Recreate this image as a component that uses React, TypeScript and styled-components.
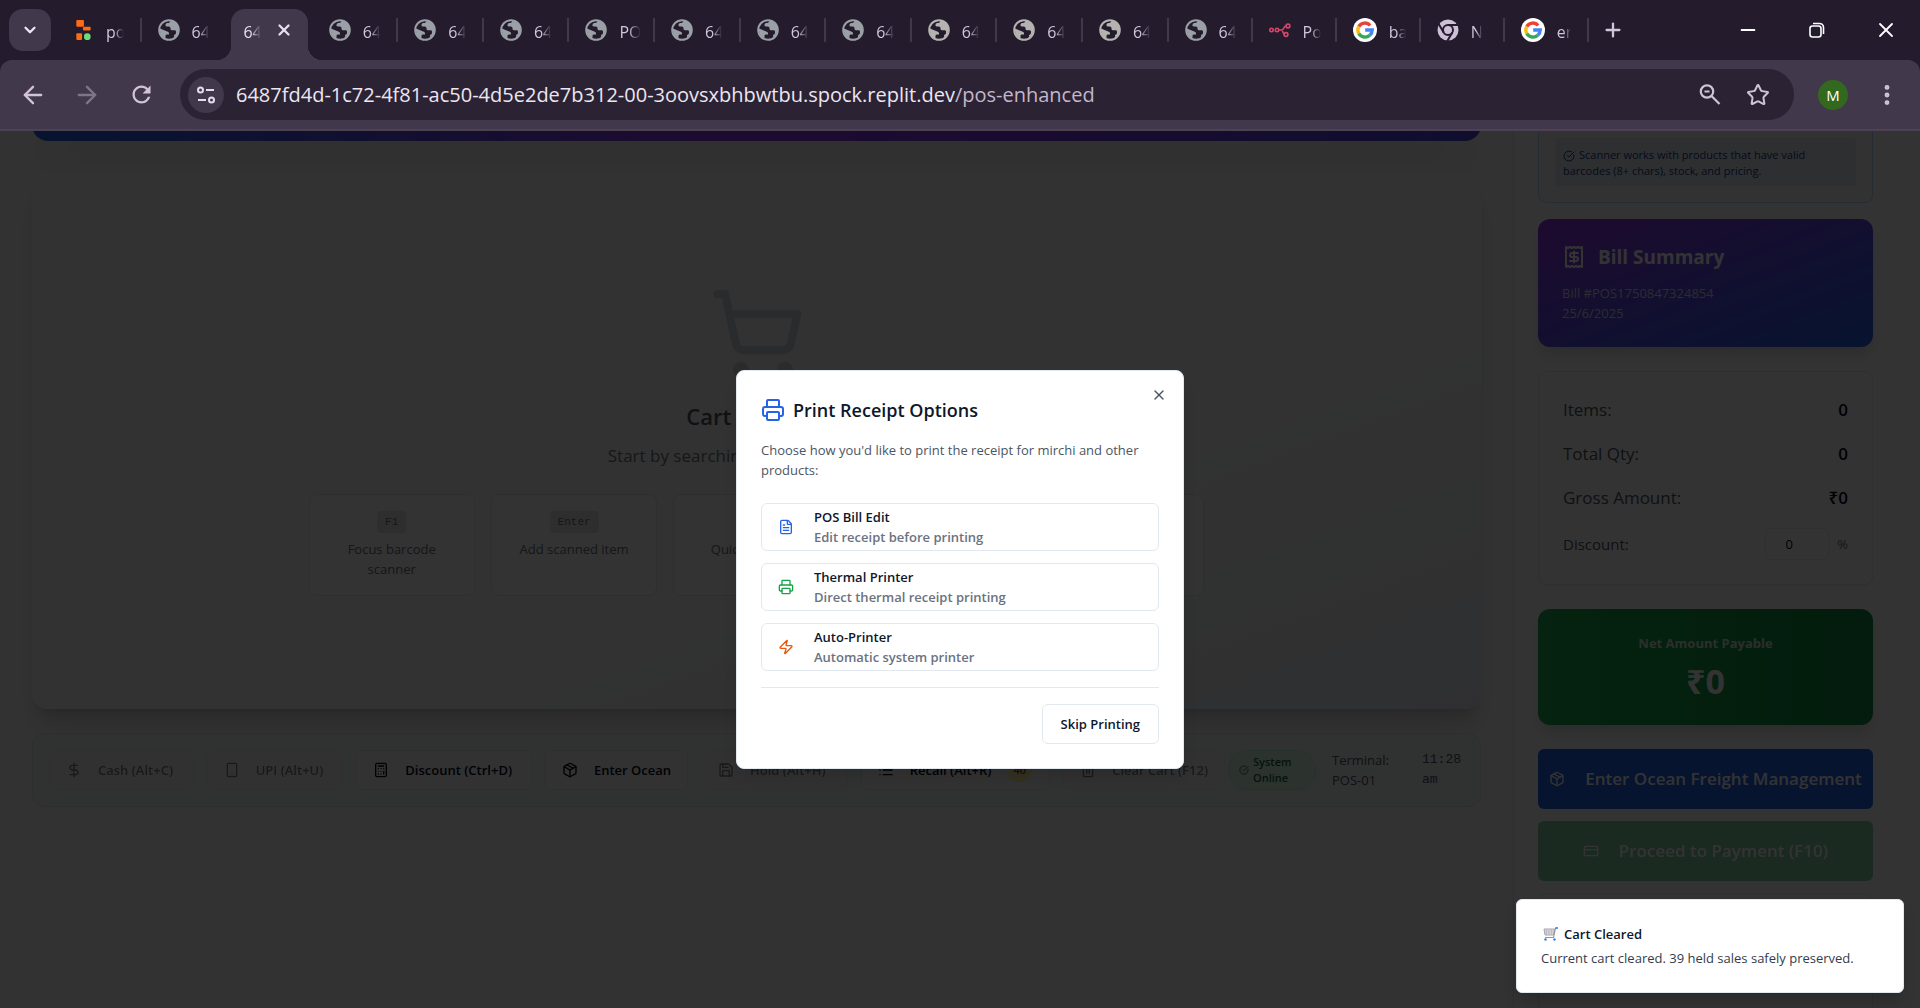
import React from "react";
import styled, { createGlobalStyle, css } from "styled-components";
import {
  ArrowLeft, ArrowRight, Calculator, ChevronDown, CircleCheckBig, CreditCard, DollarSign, EllipsisVertical,
  FileText, List, Minus, Package, Plus, Printer, Receipt, Save, ShoppingCart, Smartphone, Star,
  Trash2, X, Zap,
} from "lucide-react";

const sans = `"Open Sans", "Noto Sans", "Liberation Sans", sans-serif`;
const mono = `"Liberation Mono", monospace`;

const GlobalStyle = createGlobalStyle`
  *, *::before, *::after { box-sizing: border-box; }
  body { margin: 0; background: #fff; color: #020817; font-family: ${sans}; font-size: 13px; line-height: 20px; }
  h1, h2, h3, p, ul, dl, dd { margin: 0; padding: 0; }
  button, input { font: inherit; color: inherit; }
  svg { flex: none; display: block; }
`;

const Shell = styled.div`
  display: flex;
  flex-direction: column;
  height: 100vh;
  overflow: hidden;
`;

/* ---------- Browser chrome ---------- */

const TabStrip = styled.div`
  display: flex;
  align-items: center;
  height: 60px;
  padding-left: 9px;
  background: #241b2d;
  color: #d3c6dc;
`;

const IconButton = styled.button<{ $size?: number; $fill?: string; $radius?: number }>`
  display: flex;
  align-items: center;
  justify-content: center;
  flex: none;
  width: ${(p) => p.$size ?? 36}px;
  height: ${(p) => p.$size ?? 36}px;
  padding: 0;
  border: 0;
  border-radius: ${(p) => p.$radius ?? 18}px;
  background: ${(p) => p.$fill ?? "transparent"};
`;

const Tabs = styled.div`
  display: flex;
  flex: 0 1 1533px;
  height: 60px;
  margin-left: 5px;
`;

const TabCell = styled.div<{ $divider: boolean; $grow: number }>`
  display: flex;
  flex: ${(p) => p.$grow} 1 0;
  min-width: 0;
  align-items: center;
  background: ${(p) =>
    p.$divider ? "linear-gradient(#42384b, #42384b) right 18px / 2px 24px no-repeat" : "none"};
`;

const TabButton = styled.button`
  display: flex;
  align-items: center;
  gap: 12px;
  height: 42px;
  padding: 0 16px;
  border: 0;
  background: none;
  font-size: 16px;
`;

const TabLabel = styled.span`
  padding-top: 3px;
  white-space: nowrap;
  line-height: 24px;
  mask-image: linear-gradient(90deg, #000 40%, transparent 95%);
`;

const ActiveTab = styled.div`
  position: relative;
  display: flex;
  align-items: center;
  justify-content: space-between;
  width: 77px;
  height: 51px;
  margin: 9px auto 0;
  padding: 0 15px 9px 12px;
  border-radius: 14px 14px 0 0;
  background: #42384b;
  color: #e9e0ef;
  font-size: 16px;
  &::before, &::after {
    content: "";
    position: absolute;
    bottom: 0;
    width: 14px;
    height: 14px;
  }
  &::before { left: -14px; background: radial-gradient(circle at 0 0, transparent 14px, #42384b 14px); }
  &::after { right: -14px; background: radial-gradient(circle at 100% 0, transparent 14px, #42384b 14px); }
`;

const PlainButton = styled.button`
  display: flex;
  padding: 0;
  border: 0;
  background: none;
`;

const WindowControls = styled.div`
  display: flex;
  margin-left: auto;
  color: #fff;
`;

const WindowButton = styled.button`
  display: flex;
  align-items: center;
  justify-content: center;
  width: 69px;
  height: 60px;
  padding: 0;
  border: 0;
  background: none;
`;

const NavBar = styled.div`
  background: #241b2d;
`;

const NavInner = styled.div`
  display: flex;
  align-items: center;
  height: 71px;
  padding: 0 15px;
  border-bottom: 2px solid #4d4154;
  border-radius: 12px 12px 0 0;
  background: #42384b;
  color: #d3c2dc;
`;

const NavButtons = styled.div`
  display: flex;
  gap: 18px;
  margin-right: 21px;
`;

const AddressBar = styled.div`
  display: flex;
  flex: 1;
  align-items: center;
  height: 51px;
  padding: 0 18px 0 8px;
  border-radius: 26px;
  background: #2b2234;
`;

const AddressText = styled.input<{ $muted?: boolean }>`
  padding: 0;
  border: 0;
  outline: 0;
  background: none;
  font-size: 20px;
  line-height: 28px;
  color: ${(p) => (p.$muted ? "#c3b7ca" : "#ece6f0")};
  ${(p) => (p.$muted ? css`flex: 1; min-width: 0;` : css`field-sizing: content; margin-left: 12px;`)}
`;

const AddressActions = styled.div`
  display: flex;
  gap: 12px;
`;

const Avatar = styled.button`
  width: 30px;
  height: 30px;
  margin: 0 21px 0 24px;
  padding: 0;
  border: 0;
  border-radius: 50%;
  background: #33691e;
  color: #fff;
  font-size: 15px;
`;

/* ---------- Page ---------- */

const Viewport = styled.div`
  position: relative;
  flex: 1;
  min-height: 0;
  overflow: hidden;
`;

const Page = styled.div`
  display: flex;
  height: 100%;
  background: #fafafa;
`;

const Main = styled.main`
  display: flex;
  flex: 1;
  flex-direction: column;
  min-width: 0;
  padding: 0 32px;
`;

const Banner = styled.div`
  flex: none;
  height: 34px;
  margin-top: -24px;
  border-radius: 16px;
  background: linear-gradient(90deg, #2563eb, #9333ea 50%, #4f46e5);
  box-shadow: 0 25px 50px -12px rgba(0, 0, 0, 0.25);
`;

const CartCard = styled.section`
  display: flex;
  flex-direction: column;
  align-items: center;
  margin-top: 32px;
  padding: 113px 24px;
  border-radius: 16px;
  background: linear-gradient(to bottom right, #fafafa 60%, #e8ecf2);
  box-shadow: 0 20px 25px -5px rgba(0, 0, 0, 0.14), 0 8px 10px -6px rgba(0, 0, 0, 0.14);
  svg { color: #d1d5db; }
`;

const CartTitle = styled.h2`
  margin-top: 16px;
  font-size: 22px;
  line-height: 36px;
  font-weight: 600;
  color: #4b5563;
`;

const CartHint = styled.p`
  margin: 8px 0 24px;
  font-size: 17px;
  line-height: 28px;
  color: #6b7280;
`;

const Shortcuts = styled.ul`
  display: grid;
  grid-template-columns: repeat(5, 1fr);
  gap: 16px;
  width: 100%;
  max-width: 896px;
  list-style: none;
`;

const Shortcut = styled.li`
  display: flex;
  flex-direction: column;
  align-items: center;
  padding: 16px;
  border: 1px solid #e5e7eb;
  border-radius: 8px;
  background: #fcfcfc;
  text-align: center;
  color: #6b7280;
`;

const Kbd = styled.kbd`
  margin-bottom: 6px;
  padding: 1px 8px;
  border-radius: 4px;
  background: #e5e7eb;
  font-family: ${mono};
  font-size: 11px;
  line-height: 20px;
`;

const ActionBar = styled.section`
  display: flex;
  align-items: center;
  gap: 13px;
  margin-top: 24px;
  padding: 16px;
  border: 1px solid #e0e3e6;
  border-radius: 12px;
  background: #f1f3f3;
`;

const ActionButton = styled.button<{ $width: number }>`
  display: flex;
  flex: 0 1 ${(p) => p.$width}px;
  align-items: center;
  gap: 16px;
  height: 40px;
  padding: 0 16px;
  border: 1px solid #e5e7eb;
  border-radius: 6px;
  background: #fafafa;
  font-weight: 600;
  white-space: nowrap;
  color: #020817;
  &:disabled { opacity: 0.5; }
`;

const CountBadge = styled.span`
  padding: 2px 6px;
  border-radius: 12px;
  background: #fef3a0;
  font-size: 11px;
  color: #92400e;
`;

const Status = styled.div`
  display: flex;
  flex: 1;
  align-items: center;
  gap: 16px;
  margin-left: -10px;
  color: #4b5563;
`;

const OnlinePill = styled.div`
  display: flex;
  align-items: center;
  gap: 4px;
  width: 88px;
  height: 40px;
  padding: 0 10px;
  border: 1px solid #bbf7d0;
  border-radius: 20px;
  background: #dcfce7;
  color: #166534;
  font-size: 11px;
  line-height: 16px;
  font-weight: 600;
`;

const Terminal = styled.p`
  width: 74px;
`;

const Clock = styled.time`
  width: 42px;
  font-family: ${mono};
  font-size: 13px;
`;

const Sidebar = styled.aside`
  flex: none;
  width: 407px;
  padding: 0 47px 0 24px;
  border-left: 1px solid #e5e7eb;
  background: #fff;
`;

const ScannerCard = styled.section`
  padding: 7px 16px 16px;
  border: 1px solid #bfdbfe;
  border-top: 0;
  border-radius: 0 0 8px 8px;
  background: #f7f9fb;
`;

const ScannerNote = styled.p`
  padding: 9px 8px 7px;
  border-radius: 4px;
  background: #e4ebf4;
  color: #1e3a8a;
  font-size: 11px;
  line-height: 16px;
  svg { display: inline-block; margin-right: 4px; vertical-align: -3px; }
`;

const BillCard = styled.section`
  margin-top: 16px;
  padding: 24px;
  border-radius: 12px;
  background: linear-gradient(to bottom right, #9333ea, #2563eb);
  box-shadow: 0 10px 15px -3px rgba(0, 0, 0, 0.15);
  color: #d9d6f0;
`;

const BillTitle = styled.h2`
  display: flex;
  align-items: center;
  gap: 12px;
  margin-bottom: 12px;
  color: #fff;
  font-size: 19px;
  line-height: 28px;
  font-weight: 700;
`;

const Totals = styled.section`
  display: flex;
  flex-direction: column;
  gap: 16px;
  margin-top: 24px;
  padding: 24px;
  border: 1px solid #e9ebee;
  border-radius: 8px;
  box-shadow: 0 1px 2px rgba(0, 0, 0, 0.06);
`;

const TotalRow = styled.div<{ $small?: boolean }>`
  display: flex;
  align-items: center;
  justify-content: space-between;
  font-size: ${(p) => (p.$small ? 15 : 17)}px;
  line-height: 28px;
  color: #4b5563;
  strong { font-weight: 600; color: #020817; }
`;

const DiscountField = styled.div`
  display: flex;
  align-items: center;
  gap: 8px;
  font-size: 13px;
  color: #6b7280;
  input {
    width: 64px;
    height: 32px;
    padding: 0 28px 0 12px;
    border: 1px solid #e2e8f0;
    border-radius: 6px;
    background: #fff;
    color: #020817;
    text-align: center;
  }
`;

const NetCard = styled.section`
  margin-top: 24px;
  padding: 24px;
  border-radius: 12px;
  background: linear-gradient(90deg, #1aae50, #118a41);
  box-shadow: 0 10px 15px -3px rgba(0, 0, 0, 0.15);
  text-align: center;
  color: #d5e8dc;
  font-weight: 700;
`;

const NetValue = styled.p`
  margin-top: 8px;
  color: #fff;
  font-size: 34px;
  line-height: 40px;
`;

const SideActions = styled.div`
  display: flex;
  flex-direction: column;
  gap: 12px;
  margin-top: 24px;
`;

const BigButton = styled.button<{ $fill: string }>`
  display: flex;
  align-items: center;
  justify-content: center;
  gap: 20px;
  height: 60px;
  padding: 0 8px;
  border: 0;
  border-radius: 6px;
  background: ${(p) => p.$fill};
  color: #fff;
  font-size: 17px;
  font-weight: 600;
  white-space: nowrap;
  &:disabled { opacity: 0.5; }
`;

const HeldCard = styled.div`
  height: 120px;
  border: 1px solid #e9ebee;
  border-radius: 8px;
`;

/* ---------- Overlay ---------- */

const Backdrop = styled.div`
  position: absolute;
  inset: 0;
  display: flex;
  align-items: center;
  justify-content: center;
  background: rgba(0, 0, 0, 0.8);
`;

const Dialog = styled.section`
  position: relative;
  width: 448px;
  max-width: 100%;
  padding: 24px;
  border: 1px solid #e2e8f0;
  border-radius: 8px;
  background: #fff;
  box-shadow: 0 10px 15px -3px rgba(0, 0, 0, 0.1);
`;

const DialogTitle = styled.h2`
  display: flex;
  align-items: center;
  gap: 8px;
  font-size: 18px;
  line-height: 30px;
  font-weight: 600;
  color: #0f172a;
  svg { color: #2563eb; }
`;

const DialogText = styled.p`
  margin: 15px 0 23px;
  color: #4b5563;
`;

const CloseButton = styled(PlainButton)`
  position: absolute;
  top: 16px;
  right: 16px;
  color: #4b5563;
`;

const Options = styled.div`
  display: flex;
  flex-direction: column;
  gap: 12px;
  padding-bottom: 16px;
  border-bottom: 1px solid #e2e8f0;
`;

const Option = styled.button<{ $tint: string }>`
  display: flex;
  align-items: center;
  gap: 20px;
  height: 48px;
  padding: 0 16px;
  border: 1px solid #e2e8f0;
  border-radius: 6px;
  background: #fff;
  text-align: left;
  font-weight: 600;
  svg { color: ${(p) => p.$tint}; }
`;

const OptionTitle = styled.span`
  display: block;
  color: #0f172a;
`;

const OptionHint = styled.span`
  display: block;
  color: #6b7280;
`;

const DialogFooter = styled.div`
  display: flex;
  justify-content: flex-end;
  padding-top: 16px;
`;

const SkipButton = styled.button`
  height: 40px;
  padding: 0 18px;
  border: 1px solid #e2e8f0;
  border-radius: 6px;
  background: #fff;
  color: #0f172a;
  font-weight: 600;
`;

const Toast = styled.div`
  position: absolute;
  right: 16px;
  bottom: 15px;
  width: 388px;
  padding: 24px;
  border: 1px solid #e2e8f0;
  border-radius: 6px;
  background: #fff;
  box-shadow: 0 10px 15px -3px rgba(0, 0, 0, 0.2);
  color: #333c4e;
`;

const ToastTitle = styled.h3`
  display: flex;
  align-items: center;
  gap: 6px;
  margin-bottom: 4px;
  padding-left: 2px;
  font-size: 13px;
  font-weight: 600;
  color: #0f172a;
`;

/* ---------- Drawn icons ---------- */

const Globe = ({ tint = "#9aa0a6" }: { tint?: string }) => (
  <svg width="22" height="22" viewBox="0 0 22 22" aria-hidden="true">
    <circle cx="11" cy="11" r="9.8" fill="#241b2d" stroke={tint} strokeWidth="2" />
    <path d="M2 9.5 8 12c1.800.7 3 1 3 2.200v1.300H8.800c-1 0-1.300.8-1.300 1.700v2.600C4 18.400 1.500 14.500 2 9.500ZM12.500 1.500c-.3 2-1.500 2.500-3.200 2.500C8 4 7.500 5 7.500 6.200c0 1.500 1.500 1.300 3.200 1.300 1.600 0 1.800 1 1.800 2.200s1 1.600 2.300 1.600h2c1.200 0 1.200 1 1.200 2.200 0 1.500-1 2.200-2 2.500v2.300c3.200-1.800 4.800-5 4.500-8.300-.4-4.500-3.500-7.800-8-8.500Z" fill={tint} />
  </svg>
);

const ReplitIcon = () => (
  <svg width="22" height="20" viewBox="-4 0 22 21" aria-hidden="true">
    <rect x="0" y="0" width="8" height="7" rx="1" fill="#ff6a13" />
    <rect x="7" y="7" width="8" height="4" rx="1" fill="#ff6a13" />
    <rect x="0" y="14" width="6" height="7" rx="1" fill="#ff6a13" />
    <circle cx="11.500" cy="17.500" r="3.500" fill="#6bdc7c" />
  </svg>
);

const GoogleIcon = () => (
  <svg width="24" height="24" viewBox="0 0 24 24" aria-hidden="true">
    <circle cx="12" cy="12" r="12" fill="#fff" />
    <g fill="none" strokeWidth="3.400">
      <path d="M17.200 7.300A7.200 7.200 0 0 0 5.800 8.500" stroke="#ea4335" />
      <path d="M5.800 8.500a7.200 7.200 0 0 0 0 7" stroke="#fbbc05" />
      <path d="M5.800 15.500a7.200 7.200 0 0 0 11 1.800" stroke="#34a853" />
      <path d="M12.200 12h7a7.200 7.200 0 0 1-2.400 5.300" stroke="#4285f4" />
    </g>
  </svg>
);

const ChromeIcon = () => (
  <svg width="22" height="22" viewBox="0 0 22 22" aria-hidden="true">
    <circle cx="11" cy="11" r="10.500" fill="#cdbfd8" />
    <g stroke="#241b2d" strokeWidth="2" fill="none">
      <circle cx="11" cy="11" r="5" />
      <path d="M11 6h10M6.700 13.500l-5-8.500M15.300 13.500l-5 8.500" />
    </g>
  </svg>
);

const LinksIcon = () => (
  <svg width="22" height="16" viewBox="0 0 22 16" fill="none" stroke="#d4476a" strokeWidth="1.600" aria-hidden="true">
    <circle cx="2.500" cy="8" r="1.700" />
    <circle cx="8" cy="8" r="1.700" />
    <circle cx="19" cy="4" r="1.900" />
    <circle cx="17" cy="12.500" r="1.900" />
    <path d="M9.700 8h2.800c2.500 0 2-4 4.600-4M12.500 8c1.500 0 1.500 4.500 3 4.500" />
  </svg>
);

const SiteInfoIcon = () => (
  <svg width="20" height="20" viewBox="0 0 20 20" fill="none" stroke="#e6dcec" strokeWidth="2" aria-hidden="true">
    <circle cx="4.500" cy="5" r="2.500" />
    <path d="M10 5h8M2 15h8" />
    <circle cx="15.500" cy="15" r="2.500" />
  </svg>
);

const ReloadIcon = () => (
  <svg width="27" height="27" viewBox="0 0 24 24" fill="currentColor" aria-hidden="true">
    <path d="M17.650 6.350C16.200 4.900 14.210 4 12 4c-4.420 0-7.990 3.580-8 8s3.570 8 8 8c3.730 0 6.840-2.550 7.730-6h-2.080c-.820 2.330-3.040 4-5.650 4-3.310 0-6-2.690-6-6s2.690-6 6-6c1.660 0 3.140.690 4.220 1.780L13 11h7V4l-2.350 2.350z" />
  </svg>
);

const ZoomOutIcon = () => (
  <svg width="24" height="24" viewBox="0 0 24 24" fill="none" stroke="#cfc3d6" strokeWidth="2.200" aria-hidden="true">
    <circle cx="9" cy="8.500" r="6.200" />
    <path d="M13.500 13l8 8M6.500 8.500h5" />
  </svg>
);

const RestoreIcon = () => (
  <svg width="16" height="16" viewBox="0 0 16 16" fill="none" stroke="currentColor" strokeWidth="1.600" aria-hidden="true">
    <rect x="1" y="4" width="11" height="11" rx="2.500" />
    <path d="M4 1.500h6.500a4 4 0 0 1 4 4V12" />
  </svg>
);

const TrolleyIcon = () => (
  <svg width="15" height="14" viewBox="0 0 15 14" fill="none" aria-hidden="true">
    <path d="M1 2h10.500l-1 6H2Z" fill="#e3e1e6" stroke="#a8a4ac" />
    <path d="M3.500 2v6M6 2v6M8.500 2v6M1.500 4h10M1.500 6h9.500" stroke="#b7b3bb" strokeWidth=".7" />
    <path d="M12.500 1l-2 9.500H2" stroke="#98939d" strokeWidth="1.200" />
    <path d="M12.300 1H15" stroke="#2f7fe0" strokeWidth="1.600" />
    <circle cx="2.500" cy="12.500" r="1.200" fill="#2f7fe0" />
    <circle cx="11.500" cy="12.500" r="1.200" fill="#2f7fe0" />
  </svg>
);

/* ---------- Data ---------- */

type TabInfo = { label: string; icon?: React.ReactNode; active?: boolean };

const gray = <Globe />;
const warm = <Globe tint="#b5b3b0" />;

const tabs: TabInfo[] = [
  { label: "po", icon: <ReplitIcon /> },
  { label: "64", icon: gray },
  { label: "64", active: true },
  { label: "64", icon: gray },
  { label: "64", icon: gray },
  { label: "64", icon: gray },
  { label: "PO", icon: gray },
  { label: "64", icon: gray },
  { label: "64", icon: gray },
  { label: "64", icon: gray },
  { label: "64", icon: warm },
  { label: "64", icon: warm },
  { label: "64", icon: warm },
  { label: "64", icon: gray },
  { label: "Po", icon: <LinksIcon /> },
  { label: "ba", icon: <GoogleIcon /> },
  { label: "N", icon: <ChromeIcon /> },
  { label: "er", icon: <GoogleIcon /> },
];

const shortcuts = [
  ["F1", "Focus barcode scanner"],
  ["Enter", "Add scanned item"],
  ["F10", "Quick payment"],
  ["F12", "Clear cart"],
  ["Alt+H", "Hold sale"],
];

const actions = [
  { label: "Cash (Alt+C)", icon: DollarSign, width: 145, disabled: true },
  { label: "UPI (Alt+U)", icon: Smartphone, width: 137, disabled: true },
  { label: "Discount (Ctrl+D)", icon: Calculator, width: 176 },
  { label: "Enter Ocean", icon: Package, width: 142 },
  { label: "Hold (Alt+H)", icon: Save, width: 147, disabled: true },
  { label: "Recall (Alt+R)", icon: List, width: 190, count: 40 },
  { label: "Clear Cart (F12)", icon: Trash2, width: 160, disabled: true },
];

const options = [
  { title: "POS Bill Edit", hint: "Edit receipt before printing", icon: FileText, tint: "#2563eb" },
  { title: "Thermal Printer", hint: "Direct thermal receipt printing", icon: Printer, tint: "#16a34a" },
  { title: "Auto-Printer", hint: "Automatic system printer", icon: Zap, tint: "#ea580c" },
];

function BrowserChrome() {
  return (
    <header>
      <TabStrip>
        <IconButton aria-label="Search tabs" $size={42} $radius={14} $fill="#42384b">
          <ChevronDown size={18} strokeWidth={3} color="#efe8f3" />
        </IconButton>
        <Tabs>
          {tabs.map((tab, i) => (
            <TabCell key={i} $divider={!tab.active && !tabs[i + 1]?.active} $grow={i < 13 ? 171 : 168}>
              {tab.active ? (
                <ActiveTab>
                  <TabLabel>{tab.label}</TabLabel>
                  <PlainButton aria-label="Close tab"><X size={18} strokeWidth={3} /></PlainButton>
                </ActiveTab>
              ) : (
                <TabButton>{tab.icon}<TabLabel>{tab.label}</TabLabel></TabButton>
              )}
            </TabCell>
          ))}
        </Tabs>
        <IconButton aria-label="New tab" $size={48}><Plus size={22} strokeWidth={2.5} /></IconButton>
        <WindowControls>
          <WindowButton aria-label="Minimize"><Minus size={22} /></WindowButton>
          <WindowButton aria-label="Restore"><RestoreIcon /></WindowButton>
          <WindowButton aria-label="Close window"><X size={24} strokeWidth={1.8} /></WindowButton>
        </WindowControls>
      </TabStrip>
      <NavBar>
        <NavInner>
          <NavButtons>
            <IconButton aria-label="Back"><ArrowLeft size={28} /></IconButton>
            <IconButton aria-label="Forward"><ArrowRight size={28} color="#80748a" /></IconButton>
            <IconButton aria-label="Reload"><ReloadIcon /></IconButton>
          </NavButtons>
          <AddressBar>
            <IconButton aria-label="Site information" $fill="#42384b"><SiteInfoIcon /></IconButton>
            <AddressText aria-label="Site address" readOnly value="6487fd4d-1c72-4f81-ac50-4d5e2de7b312-00-3oovsxbhbwtbu.spock.replit.dev" />
            <AddressText aria-label="Page path" $muted readOnly value="/pos-enhanced" />
            <AddressActions>
              <IconButton aria-label="Zoom"><ZoomOutIcon /></IconButton>
              <IconButton aria-label="Bookmark"><Star size={24} color="#cfc3d6" strokeLinejoin="miter" /></IconButton>
            </AddressActions>
          </AddressBar>
          <Avatar aria-label="Profile">M</Avatar>
          <IconButton aria-label="Menu"><EllipsisVertical size={26} strokeWidth={2.5} /></IconButton>
        </NavInner>
      </NavBar>
    </header>
  );
}

export default function App() {
  return (
    <Shell>
      <GlobalStyle />
      <BrowserChrome />
      <Viewport>
        <Page>
          <Main>
            <Banner />
            <CartCard>
              <ShoppingCart size={96} />
              <CartTitle>Cart is Empty</CartTitle>
              <CartHint>Start by searching or adding products</CartHint>
              <Shortcuts>
                {shortcuts.map(([key, text]) => (
                  <Shortcut key={key}><Kbd>{key}</Kbd>{text}</Shortcut>
                ))}
              </Shortcuts>
            </CartCard>
            <ActionBar>
              {actions.map(({ label, icon: Icon, width, disabled, count }) => (
                <ActionButton key={label} $width={width} disabled={disabled}>
                  <Icon size={16} />{label}{count && <CountBadge>{count}</CountBadge>}
                </ActionButton>
              ))}
              <Status>
                <OnlinePill><CircleCheckBig size={10} />System Online</OnlinePill>
                <Terminal>Terminal: POS-01</Terminal>
                <Clock>11:28 am</Clock>
              </Status>
            </ActionBar>
          </Main>
          <Sidebar>
            <ScannerCard>
              <ScannerNote>
                <CircleCheckBig size={12} />Scanner works with products that have valid barcodes (8+ chars), stock, and pricing.
              </ScannerNote>
            </ScannerCard>
            <BillCard>
              <BillTitle><Receipt size={24} />Bill Summary</BillTitle>
              <p>Bill #POS1750847324854</p>
              <p>25/6/2025</p>
            </BillCard>
            <Totals>
              <TotalRow><span>Items:</span><strong>0</strong></TotalRow>
              <TotalRow><span>Total Qty:</span><strong>0</strong></TotalRow>
              <TotalRow><span>Gross Amount:</span><strong>₹0</strong></TotalRow>
              <TotalRow $small>
                <label htmlFor="discount">Discount:</label>
                <DiscountField><input id="discount" defaultValue="0" inputMode="numeric" /><span>%</span></DiscountField>
              </TotalRow>
            </Totals>
            <NetCard>
              <p>Net Amount Payable</p>
              <NetValue>₹0</NetValue>
            </NetCard>
            <SideActions>
              <BigButton $fill="#2563eb"><Package size={16} />Enter Ocean Freight Management</BigButton>
              <BigButton $fill="#16a34a" disabled><CreditCard size={16} />Proceed to Payment (F10)</BigButton>
              <HeldCard />
            </SideActions>
          </Sidebar>
        </Page>
        <Backdrop>
          <Dialog role="dialog" aria-labelledby="print-title">
            <DialogTitle id="print-title"><Printer size={24} />Print Receipt Options</DialogTitle>
            <DialogText>Choose how you'd like to print the receipt for mirchi and other products:</DialogText>
            <Options>
              {options.map(({ title, hint, icon: Icon, tint }) => (
                <Option key={title} $tint={tint}>
                  <Icon size={16} />
                  <span><OptionTitle>{title}</OptionTitle><OptionHint>{hint}</OptionHint></span>
                </Option>
              ))}
            </Options>
            <DialogFooter><SkipButton>Skip Printing</SkipButton></DialogFooter>
            <CloseButton aria-label="Close"><X size={16} /></CloseButton>
          </Dialog>
        </Backdrop>
        <Toast role="status">
          <ToastTitle><TrolleyIcon />Cart Cleared</ToastTitle>
          <p>Current cart cleared. 39 held sales safely preserved.</p>
        </Toast>
      </Viewport>
    </Shell>
  );
}
